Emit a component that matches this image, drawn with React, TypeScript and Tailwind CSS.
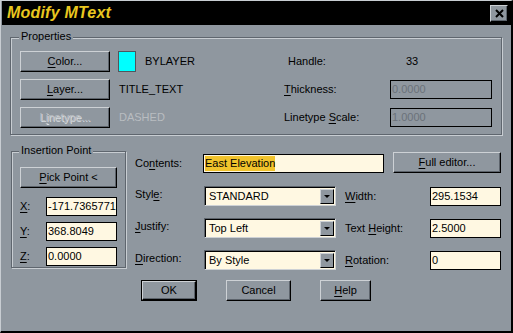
import React from 'react';

const BG = 'bg-[#8f979f]';

function Key({ children }: { children: React.ReactNode }) {
  return <span className="underline underline-offset-[2px] decoration-1">{children}</span>;
}

function Button({
  children,
  className = '',
  disabled = false,
}: {
  children: React.ReactNode;
  className?: string;
  disabled?: boolean;
}) {
  return (
    <div
      className={`flex items-center justify-center border border-t-[#cdd1d5] border-l-[#cdd1d5] border-r-black border-b-black shadow-[inset_-1px_-1px_0_#5c636b] ${BG} ${
        disabled ? 'text-[#b9bdc1] [text-shadow:1px_1px_0_#d8dcdf]' : 'text-black'
      } ${className}`}
    >
      {children}
    </div>
  );
}

function Field({ value, className = '', disabled = false }: { value: string; className?: string; disabled?: boolean }) {
  return (
    <div
      className={`flex items-center h-[19px] border border-black pl-[1px] ${
        disabled ? 'text-[#6b727a] bg-transparent border-[#1e2022]' : 'bg-[#fff8e2] text-black'
      } ${className}`}
    >
      {value}
    </div>
  );
}

function Select({ value }: { value: string }) {
  return (
    <div className="w-[132px] h-[20px] border border-t-[#5c636b] border-l-[#5c636b] border-r-[#cdd1d5] border-b-[#cdd1d5] flex">
      <div className="flex-1 flex border-t border-l border-black bg-[#fff8e2]">
        <div className="flex-1 flex items-center pl-[3px]">{value}</div>
        <div className="w-[14px] my-[1px] mr-[1px] flex items-center justify-center border border-t-[#cdd1d5] border-l-[#cdd1d5] border-r-black border-b-black bg-[#8f979f]">
          <svg width="6" height="4" viewBox="0 0 6 4">
            <path d="M0 0h6L3 3z" fill="black" />
          </svg>
        </div>
      </div>
    </div>
  );
}

export default function App() {
  return (
    <div
      className={`w-[513px] h-[333px] ${BG} border-t border-l border-[#c8cdd2] border-r-2 border-b-2 border-r-black border-b-black pl-[1px] text-[11px] leading-none text-black font-['Liberation_Sans',Arial,sans-serif] flex flex-col`}
    >
      {/* title bar */}
      <div className="h-[24px] bg-black flex items-center justify-between pl-[5px] pr-[3px]">
        <span className="text-[16px] font-bold italic text-[#e9c61f] tracking-[0.2px]">Modify MText</span>
        <div className="w-[18px] h-[17px] flex items-center justify-center border border-t-[#cdd1d5] border-l-[#cdd1d5] border-r-black border-b-black shadow-[inset_-1px_-1px_0_#5c636b] bg-[#8f979f]">
          <svg width="9" height="9" viewBox="0 0 9 9">
            <path d="M1 1L8 8M8 1L1 8" stroke="black" strokeWidth="2" />
          </svg>
        </div>
      </div>

      <div className="pl-[8px] pt-[12px]">
        {/* Properties */}
        <div className="relative w-[492px] h-[98px] border border-[#5f666e] shadow-[1px_1px_0_#c8cdd2,inset_1px_1px_0_#c8cdd2] pl-[9px] pt-[13px] flex flex-col gap-[7px]">
          <span className={`absolute -top-[7px] left-[8px] px-[2px] ${BG}`}>Properties</span>

          <div className="flex items-center h-[21px]">
            <div className="w-[264px] flex items-center">
              <Button className="w-[90px] h-[21px]">
                <Key>C</Key>olor...
              </Button>
              <div className="ml-[8px] w-[18px] h-[21px] border border-[#4f565d] bg-[#00ffff]" />
              <span className="ml-[9px]">BYLAYER</span>
            </div>
            <span className="w-[122px] pl-[4px]">Handle:</span>
            <span>33</span>
          </div>

          <div className="flex items-center h-[21px]">
            <div className="w-[264px] flex items-center">
              <Button className="w-[90px] h-[21px]">
                <Key>L</Key>ayer...
              </Button>
              <span className="ml-[9px]">TITLE_TEXT</span>
            </div>
            <span className="w-[106px]">
              <Key>T</Key>hickness:
            </span>
            <Field value="0.0000" disabled className="w-[102px]" />
          </div>

          <div className="flex items-center h-[21px]">
            <div className="w-[264px] flex items-center">
              <Button className="w-[90px] h-[21px]" disabled>
                L<Key>i</Key>netype...
              </Button>
              <span className="ml-[9px] text-[#b9bdc1]">DASHED</span>
            </div>
            <span className="w-[106px]">
              Linetype <Key>S</Key>cale:
            </span>
            <Field value="1.0000" disabled className="w-[102px]" />
          </div>
        </div>

        <div className="flex mt-[16px]">
          {/* Insertion Point */}
          <div className="relative ml-[1px] w-[115px] h-[117px] border border-[#5f666e] shadow-[1px_1px_0_#c8cdd2,inset_1px_1px_0_#c8cdd2] pl-[8px] pt-[15px] flex flex-col">
            <span className={`absolute -top-[7px] left-[7px] px-[2px] ${BG}`}>Insertion Point</span>
            <Button className="w-[97px] h-[21px]">
              <Key>P</Key>ick Point &lt;
            </Button>
            <div className="flex flex-col gap-[6px] mt-[9px]">
              {[
                ['X', '-171.7365771'],
                ['Y', '368.8049'],
                ['Z', '0.0000'],
              ].map(([k, v]) => (
                <div key={k} className="flex items-center">
                  <span className="w-[26px]">
                    <Key>{k}</Key>:
                  </span>
                  <Field value={v} className="w-[71px]" />
                </div>
              ))}
            </div>
          </div>

          {/* right side */}
          <div className="ml-[9px] mt-[1px] flex flex-col">
            <div className="flex items-center h-[21px]">
              <span className="w-[68px] mt-[2px]">
                Co<Key>n</Key>tents:
              </span>
              <div className="w-[181px] h-[19px] mt-[2px] border border-black bg-[#fff8e2] flex items-center pl-[1px]">
                <span className="bg-[#f1c32c] py-[2px]">East Elevation</span>
              </div>
              <Button className="ml-[9px] w-[108px] h-[21px]">
                <Key>F</Key>ull editor...
              </Button>
            </div>

            <div className="flex flex-col gap-[12px] mt-[13px]">
              {[
                [<>Styl<Key>e</Key>:</>, 'STANDARD', <><Key>W</Key>idth:</>, '295.1534'],
                [<><Key>J</Key>ustify:</>, 'Top Left', <>Text <Key>H</Key>eight:</>, '2.5000'],
                [<><Key>D</Key>irection:</>, 'By Style', <><Key>R</Key>otation:</>, '0'],
              ].map(([l1, v1, l2, v2], i) => (
                <div key={i} className="flex items-center h-[20px]">
                  <span className="w-[69px] -mt-[3px]">{l1}</span>
                  <Select value={v1 as string} />
                  <span className="w-[85px] pl-[9px] box-content">{l2}</span>
                  <Field value={v2 as string} className="w-[71px]" />
                </div>
              ))}
            </div>

            <div className="flex mt-[10px] ml-[6px]">
              <div className="border border-black">
                <Button className="w-[54px] h-[19px]">OK</Button>
              </div>
              <Button className="ml-[29px] w-[65px] h-[21px]">Cancel</Button>
              <Button className="ml-[29px] w-[51px] h-[21px]">
                <Key>H</Key>elp
              </Button>
            </div>
          </div>
        </div>
      </div>
    </div>
  );
}
